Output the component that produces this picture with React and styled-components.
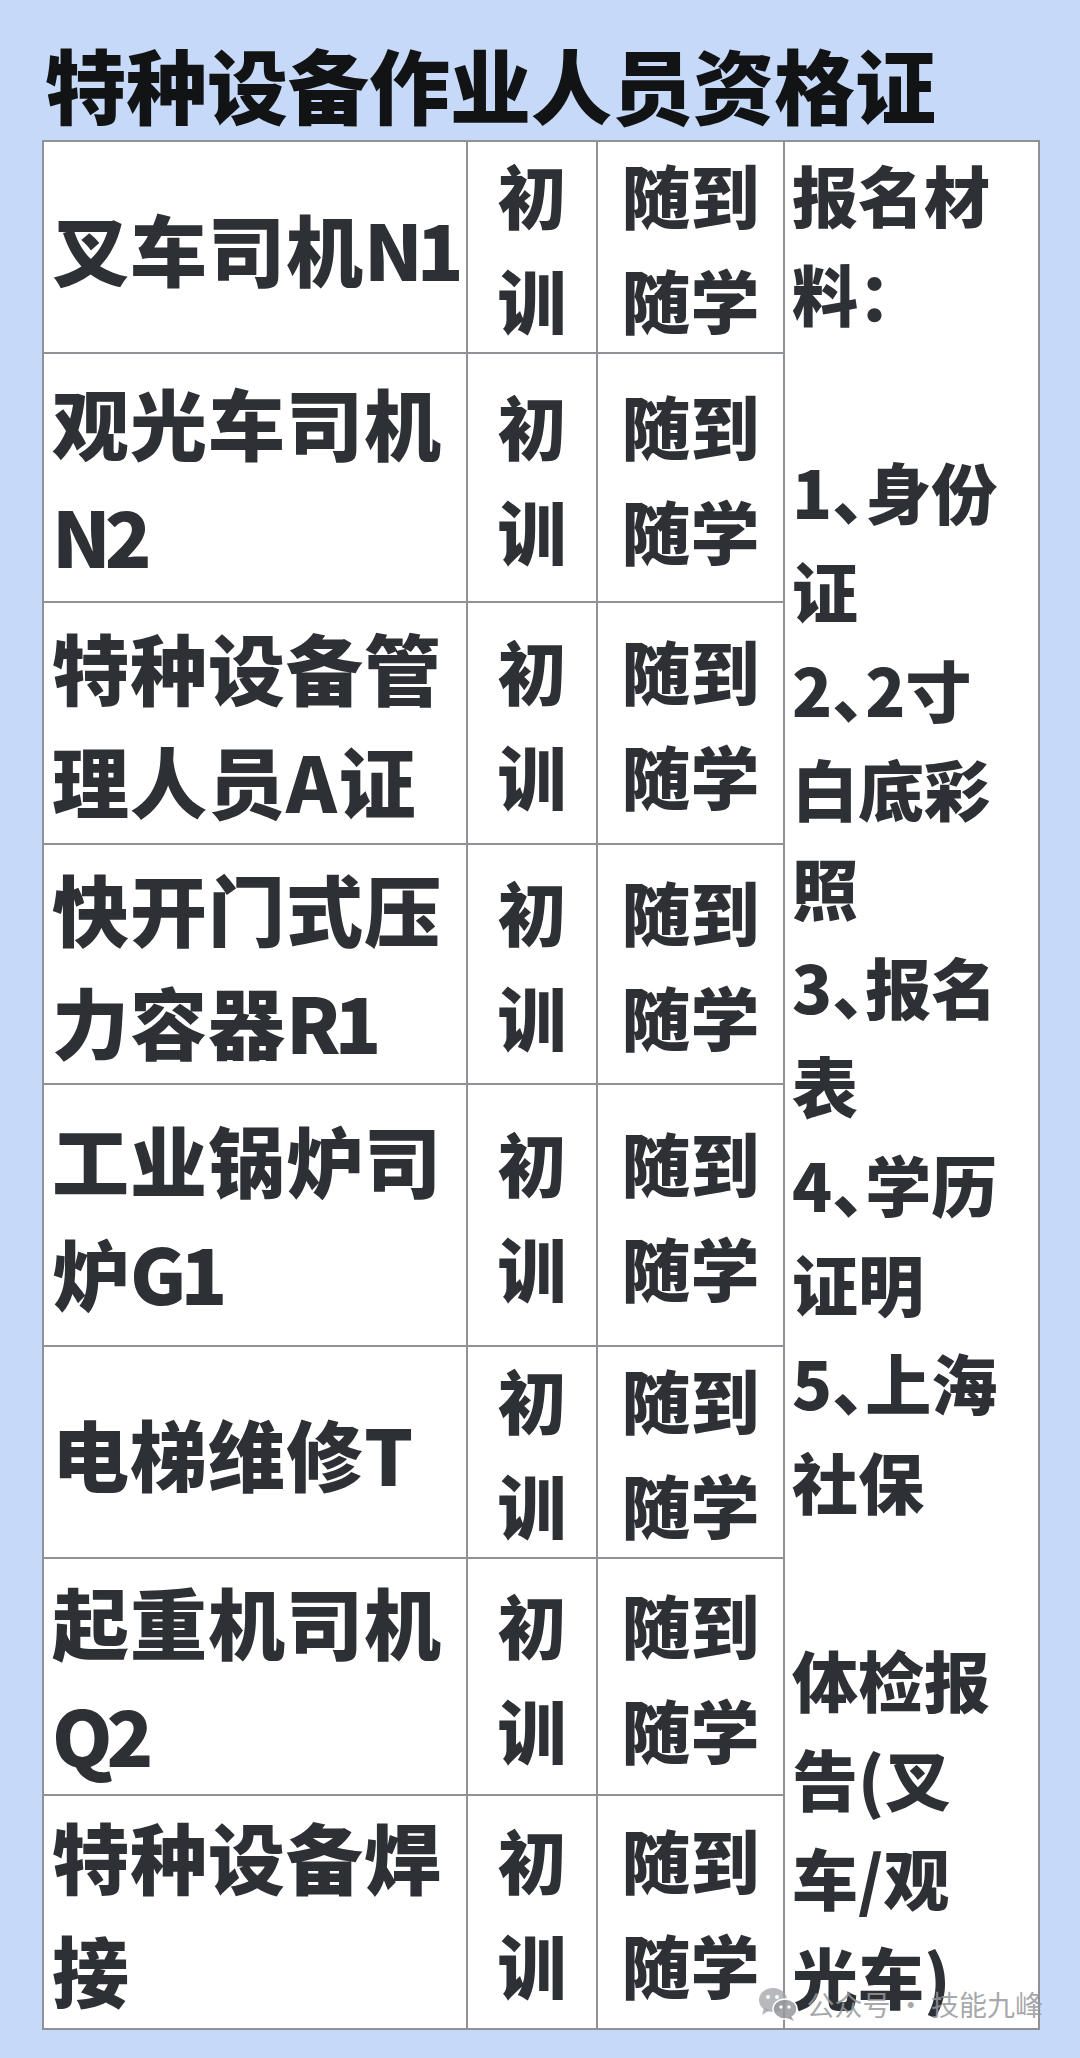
import React from "react";
import styled, { createGlobalStyle } from "styled-components";

const GlobalStyle = createGlobalStyle`
  html, body {
    margin: 0;
    padding: 0;
    background: #c6d9f8;
  }
  body {
    font-family: "Noto Sans CJK SC", "Noto Sans", sans-serif;
  }
`;

const Page = styled.div`
  width: 1080px;
  height: 2058px;
  box-sizing: border-box;
  padding: 34px 43px 0 42px;
  background: #c6d9f8;
  position: relative;
`;

const Title = styled.h1`
  margin: 0 0 9px 3px;
  height: 97px;
  line-height: 97px;
  font-size: 81px;
  font-weight: 900;
  color: #121314;
  white-space: nowrap;
`;

const TableWrap = styled.div`
  position: relative;
`;

const Table = styled.table`
  width: 996px;
  border-collapse: collapse;
  table-layout: fixed;
  background: #fff;
  color: #2d3035;
  font-weight: 900;
`;

const Cell = styled.td`
  border: 2px solid #8e9195;
  padding: 0;
  vertical-align: middle;
`;

const NameCell = styled(Cell)`
  padding-left: 8px;
  font-size: 77px;
  line-height: 113px;
  letter-spacing: 1px;
  white-space: nowrap;
`;

const Latin = styled.span`
  letter-spacing: -6px;
  &:not(:last-child) {
    margin-right: 8px;
  }
`;

const ShortCell = styled(Cell)`
  text-align: center;
  font-size: 69px;
  line-height: 105px;
  white-space: nowrap;
`;

const MaterialCell = styled(Cell)`
  vertical-align: top;
  padding: 2px 0 0 7px;
  font-size: 66px;
  line-height: 99px;
  white-space: nowrap;
  font-feature-settings: "halt";
`;

const Line = styled.div`
  min-height: ${(p) => p.$h}px;
`;

const Watermark = styled.div`
  position: absolute;
  right: -6px;
  bottom: 6px;
  display: flex;
  align-items: center;
  gap: 8px;
  font-size: 28px;
  font-weight: 400;
  color: rgba(150, 152, 156, 0.85);
  white-space: nowrap;
  pointer-events: none;
`;

const rows = [
  { name: [["叉车司机", "N1"]], h: 209 },
  { name: [["观光车司机"], ["", "N2"]], h: 249 },
  { name: [["特种设备管"], ["理人员", "A", "证"]], h: 242 },
  { name: [["快开门式压"], ["力容器", "R1"]], h: 240 },
  { name: [["工业锅炉司"], ["炉", "G1"]], h: 262 },
  { name: [["电梯维修", "T"]], h: 209 },
  { name: [["起重机司机"], ["", "Q2"]], h: 237 },
  { name: [["特种设备焊"], ["接"]], h: 234 },
];

const materials = [
  "报名材",
  "料：",
  "",
  "1、身份",
  "证",
  "2、2寸",
  "白底彩",
  "照",
  "3、报名",
  "表",
  "4、学历",
  "证明",
  "5、上海",
  "社保",
  "",
  "体检报",
  "告(叉",
  "车/观",
  "光车)",
];

const WechatIcon = () => (
  <svg width="40" height="36" viewBox="0 0 40 36">
    <ellipse cx="15" cy="14" rx="14" ry="12" fill="rgba(160,162,166,0.75)" />
    <path d="M6 22 L4 29 L12 24 Z" fill="rgba(160,162,166,0.75)" />
    <ellipse cx="27" cy="23" rx="12" ry="10" fill="rgba(150,152,156,0.85)" stroke="#fff" strokeWidth="1.5" />
    <path d="M33 30 L36 35 L29 32 Z" fill="rgba(150,152,156,0.85)" />
    <circle cx="10" cy="11" r="2" fill="#fff" />
    <circle cx="19" cy="11" r="2" fill="#fff" />
    <circle cx="23" cy="21" r="1.7" fill="#fff" />
    <circle cx="31" cy="21" r="1.7" fill="#fff" />
  </svg>
);

// parts alternate: CJK, Latin, CJK, ...
const NameLine = ({ parts }) => (
  <div>
    {parts.map((p, k) => (k % 2 === 1 ? <Latin key={k}>{p}</Latin> : <span key={k}>{p}</span>))}
  </div>
);

export default function App() {
  return (
    <Page>
      <GlobalStyle />
      <Title>特种设备作业人员资格证</Title>
      <TableWrap>
        <Table>
          <colgroup>
            <col style={{ width: 424 }} />
            <col style={{ width: 130 }} />
            <col style={{ width: 187 }} />
            <col style={{ width: 255 }} />
          </colgroup>
          <tbody>
            {rows.map((r, i) => (
              <tr key={i} style={{ height: r.h }}>
                <NameCell>
                  {r.name.map((parts, k) => (
                    <NameLine key={k} parts={parts} />
                  ))}
                </NameCell>
                <ShortCell>
                  <div>初</div>
                  <div>训</div>
                </ShortCell>
                <ShortCell>
                  <div>随到</div>
                  <div>随学</div>
                </ShortCell>
                {i === 0 && (
                  <MaterialCell rowSpan={rows.length}>
                    {materials.map((t, k) => (
                      <Line key={k} $h={99}>
                        {t}
                      </Line>
                    ))}
                  </MaterialCell>
                )}
              </tr>
            ))}
          </tbody>
        </Table>
        <Watermark>
          <WechatIcon />
          <span>公众号 · 技能九峰</span>
        </Watermark>
      </TableWrap>
    </Page>
  );
}
